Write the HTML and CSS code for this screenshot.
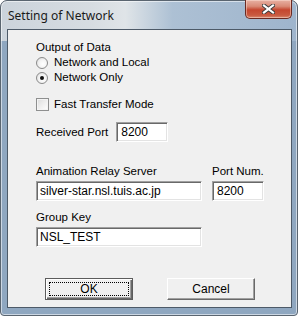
FILE: index.html
```html
<!DOCTYPE html>
<html>
<head>
<meta charset="utf-8">
<link rel="stylesheet" href="styles.css">
</head>
<body>
<div class="window">
  <div class="titlebar">
    <span class="title">Setting of Network</span>
    <div class="close">
      <svg width="13" height="10" viewBox="0 0 13 10">
        <path d="M2 1.5 L11 8.5 M11 1.5 L2 8.5" stroke="#3a3a3a" stroke-width="4" stroke-linecap="square" fill="none"/>
        <path d="M2 1.5 L11 8.5 M11 1.5 L2 8.5" stroke="#ffffff" stroke-width="2.2" stroke-linecap="square" fill="none"/>
      </svg>
    </div>
  </div>
  <div class="client">
    <div class="line">Output of Data</div>
    <div class="line opt"><span class="radio"></span>Network and Local</div>
    <div class="line opt"><span class="radio on"></span>Network Only</div>
    <div class="line opt check-row"><span class="check"></span>Fast Transfer Mode</div>
    <div class="port-row"><span>Received Port</span><div class="input small">8200</div></div>
    <div class="server-grid">
      <div class="col wide">
        <div class="line">Animation Relay Server</div>
        <div class="input">silver-star.nsl.tuis.ac.jp</div>
      </div>
      <div class="col">
        <div class="line">Port Num.</div>
        <div class="input small">8200</div>
      </div>
    </div>
    <div class="line group-label">Group Key</div>
    <div class="input">NSL_TEST</div>
    <div class="buttons">
      <div class="btn default"><span class="focus">OK</span></div>
      <div class="btn">Cancel</div>
    </div>
  </div>
</div>
</body>
</html>
```
FILE: styles.css
```css
html, body { margin: 0; padding: 0; background: #ffffff; }
body { width: 298px; height: 316px; overflow: hidden; }

.window {
  box-sizing: border-box;
  width: 298px;
  height: 316px;
  border: 1px solid #5a6570;
  border-radius: 7px 7px 4px 4px;
  background:
    linear-gradient(90deg, rgba(210,216,222,0.9) 0%, rgba(222,226,229,0.9) 30%, rgba(232,235,236,0.9) 42%, rgba(176,195,214,0.9) 58%, rgba(160,182,206,0.9) 100%),
    #a9bdd2;
  background-size: 100% 40px, 100% 100%;
  background-repeat: no-repeat;
  background-color: #8fa7c0;
  display: flex;
  flex-direction: column;
  box-shadow: inset 0 0 0 1px rgba(255,255,255,0.55);
}

.titlebar {
  height: 28px;
  display: flex;
  justify-content: space-between;
  align-items: flex-start;
  padding-left: 7px;
  padding-right: 5px;
}
.title {
  font-family: "Noto Sans", "Liberation Sans", sans-serif;
  font-size: 12px;
  line-height: 14px;
  margin-top: 8px;
  color: #1a1a1a;
}
.close {
  width: 47px;
  height: 19px;
  margin-top: -1px;
  box-sizing: border-box;
  border: 1px solid #6b2a22;
  border-top: none;
  border-radius: 0 0 5px 5px;
  background: linear-gradient(180deg, #e8b1a3 0%, #d98a76 35%, #c5462f 55%, #c95a40 85%, #d98b72 100%);
  box-shadow: inset 0 0 0 1px rgba(255,230,220,0.45);
  display: flex;
  align-items: center;
  justify-content: center;
}

.client {
  margin: 0 5px 0 6px;
  height: 279px;
  box-sizing: border-box;
  border: 1px solid #4d5a68;
  background: #f0f0f0;
  padding: 10px 0 0 28px;
  font-family: "Liberation Sans", Arial, sans-serif;
  font-size: 11.5px;
  color: #000;
}

.line { height: 15px; line-height: 15px; white-space: nowrap; }
.opt { display: flex; align-items: center; }

.radio {
  box-sizing: border-box;
  width: 12px; height: 12px;
  border-radius: 50%;
  border: 1px solid #8a8a8a;
  background: radial-gradient(circle at 60% 60%, #ffffff 0%, #f4f4f4 45%, #d8d8d8 100%);
  margin-right: 6px;
  position: relative;
}
.radio.on::after {
  content: "";
  position: absolute;
  left: 3px; top: 3px;
  width: 4px; height: 4px;
  border-radius: 50%;
  background: #111;
}
.check-row { margin-top: 12px; }
.check {
  box-sizing: border-box;
  width: 13px; height: 13px;
  border: 1px solid #8e8f8f;
  background: linear-gradient(135deg, #dcdcdc 0%, #f2f2f2 60%, #ffffff 100%);
  box-shadow: inset 0 0 0 1px #f4f4f4;
  margin-right: 5px;
}

.port-row {
  margin-top: 10px;
  height: 20px;
  display: flex;
  align-items: center;
  gap: 8px;
}

.input {
  box-sizing: border-box;
  width: 166px;
  height: 20px;
  background: #ffffff;
  border: 1px solid;
  border-color: #a0a0a0 #ffffff #ffffff #a0a0a0;
  box-shadow: inset 1px 1px 0 #696969, inset -1px -1px 0 #e3e3e3;
  padding: 0 0 0 3px;
  line-height: 18px;
  font-size: 12px;
  white-space: nowrap;
  overflow: hidden;
}
.input.small { width: 52px; padding-left: 4px; }

.server-grid {
  margin-top: 22px;
  display: flex;
  gap: 10px;
}
.col { display: flex; flex-direction: column; gap: 2px; }
.group-label { margin-top: 9px; margin-bottom: 2px; }

.buttons {
  margin-top: 31px;
  padding-left: 9px;
  display: flex;
  gap: 34px;
}
.btn {
  box-sizing: border-box;
  width: 88px;
  height: 22px;
  background: #f0f0f0;
  border: 1px solid;
  border-color: #ffffff #696969 #696969 #ffffff;
  box-shadow: inset -1px -1px 0 #a0a0a0;
  display: flex;
  align-items: center;
  justify-content: center;
  font-size: 12px;
}
.btn.default {
  border: 1px solid #5c5c5c;
  box-shadow: inset 1px 1px 0 #ffffff, inset -1px -1px 0 #696969, inset -2px -2px 0 #a0a0a0;
  padding: 3px;
}
.focus {
  box-sizing: border-box;
  width: 100%;
  height: 100%;
  border: 1px dotted #000;
  display: flex;
  align-items: center;
  justify-content: center;
}
```
